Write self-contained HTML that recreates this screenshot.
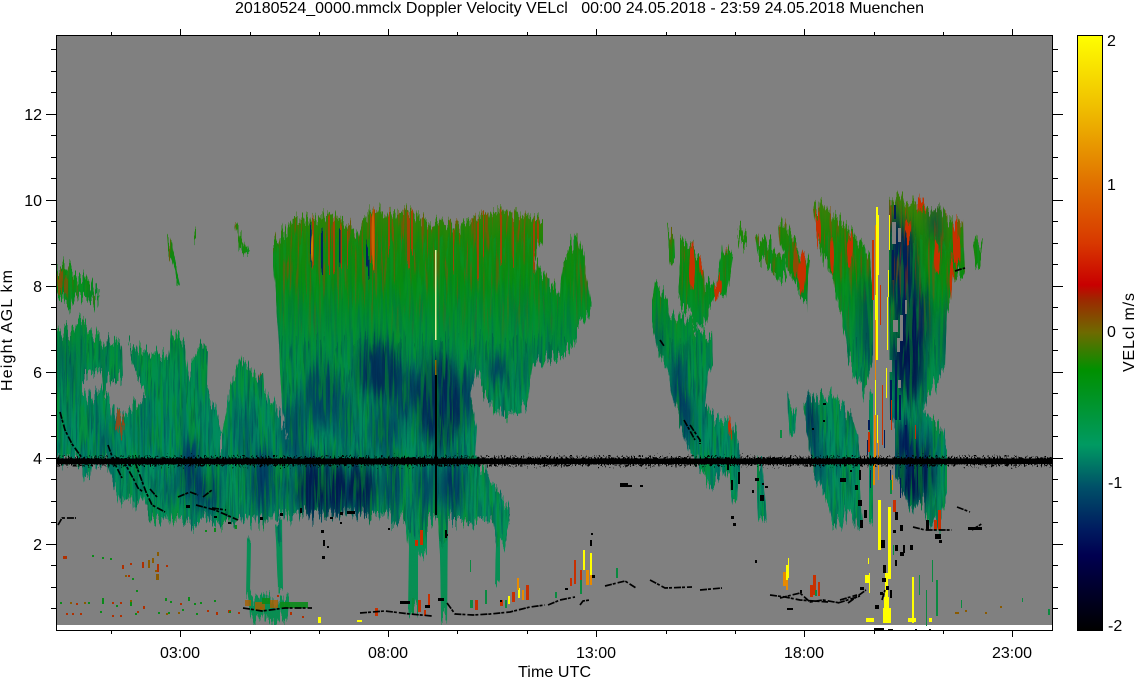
<!DOCTYPE html>
<html><head><meta charset="utf-8"><title>20180524_0000.mmclx Doppler Velocity</title>
<style>
html,body{margin:0;padding:0;background:#fff;width:1135px;height:678px;overflow:hidden}
svg{display:block}
text{font-family:"Liberation Sans",sans-serif;font-size:16px;fill:#000;white-space:pre}
</style></head><body>
<svg xmlns="http://www.w3.org/2000/svg" width="1135" height="678" viewBox="0 0 1135 678">
<defs>
<linearGradient id="cg" gradientUnits="userSpaceOnUse" x1="0" y1="205" x2="0" y2="630">
<stop offset="0" stop-color="#3a7f08"/><stop offset=".08" stop-color="#1a8608"/><stop offset=".18" stop-color="#068c10"/><stop offset=".27" stop-color="#008c30"/><stop offset=".39" stop-color="#008f4c"/><stop offset=".55" stop-color="#008c60"/><stop offset=".74" stop-color="#049058"/><stop offset="1" stop-color="#0a8c50"/>
</linearGradient>
<linearGradient id="cb" gradientUnits="userSpaceOnUse" x1="0" y1="35" x2="0" y2="630">
<stop offset="0" stop-color="#ffff00"/><stop offset=".126" stop-color="#efbc00"/><stop offset=".25" stop-color="#e07000"/><stop offset=".35" stop-color="#d83800"/><stop offset=".42" stop-color="#c80000"/><stop offset=".445" stop-color="#9c2800"/><stop offset=".5" stop-color="#6e6a00"/><stop offset=".563" stop-color="#009000"/><stop offset=".689" stop-color="#009a62"/><stop offset=".76" stop-color="#005068"/><stop offset=".83" stop-color="#001c60"/><stop offset=".875" stop-color="#000050"/><stop offset="1" stop-color="#000000"/>
</linearGradient>
<linearGradient id="ra" gradientUnits="userSpaceOnUse" x1="0" y1="205" x2="0" y2="345">
<stop offset="0" stop-color="#000" stop-opacity=".6"/><stop offset=".45" stop-color="#000" stop-opacity=".4"/><stop offset="1" stop-color="#000" stop-opacity="0"/>
</linearGradient>
<linearGradient id="ba" gradientUnits="userSpaceOnUse" x1="0" y1="260" x2="0" y2="520">
<stop offset="0" stop-color="#000" stop-opacity=".05"/><stop offset=".4" stop-color="#000" stop-opacity=".3"/><stop offset="1" stop-color="#000" stop-opacity=".4"/>
</linearGradient>
<path id="cl" d="M57 265L65 268 72 272 78 278 85 275 90 283 100 294 98 303 88 300 75 298 70 306 60 298 57 297Z
M57 335L68 327 82 324 90 333 98 335 103 342 115 338 122 347 123 377 117 385 108 382 104 395 110 400 112 413 118 418 133 408 146 403 143 390 135 375 128 344 150 353 168 357 172 330 185 345 188 373 200 343 208 348 207 390 217 413 222 437 228 397 240 357 252 373 263 372 264 395 272 402 281 420 300 470 305 515 250 520 197 522 153 522 143 497 133 510 132 497 120 502 112 480 108 462 92 465 90 477 84 478 80 462 57 462Z
M273 240L287 230 293 219 310 219 333 214 350 225 358 240 362 222 373 208 387 215 410 210 433 225 440 220 460 225 480 215 503 210 543 220 543 237 534 257 537 267 560 293 563 257 577 237 585 267 592 310 577 323 577 343 560 357 533 363 527 407 503 420 487 397 477 367 470 393 477 427 475 460 487 473 510 510 508 527 503 540 495 522 470 520 403 520 380 515 303 513 297 473 283 417 280 367 277 310 273 260Z
M405 520L427 520 427 553 418 556 418 607 408 607 409 553Z M438 520L448 520 447 620 441 620 440 560Z M493 520L510 520 505 543 500 550 500 583 495 583 496 543Z M247 537L251 537 250 600 246 600Z M275 523L282 523 283 590 278 590Z M247 597L290 600 288 618 270 621 250 620Z
M167 232L172 240 175 262 180 285 176 283 172 258 168 245Z M194 233L196 233 196 245 194 244Z M234 222L242 236 250 254 246 254 238 242Z
M667 230L674 235 675 265 670 260Z M680 242L693 248 703 262 705 285 717 283 723 245 733 258 730 278 725 297 715 293 708 312 703 327 693 325 687 308 683 308 678 293 680 272Z
M655 282L668 302 670 318 682 312 688 322 700 332 712 338 713 362 708 378 705 408 717 418 730 420 740 442 740 458 737 502 733 502 730 485 723 472 712 488 697 458 687 445 673 402 667 372 657 348 652 325 652 298Z
M757 465L762 465 767 518 758 520 757 495Z M787 397L797 415 795 432 790 438 788 418Z M737 228L747 233 747 245 740 245Z M755 235L770 243 785 260 787 275 780 283 770 268 757 252Z M778 222L787 225 800 248 810 265 808 282 807 305 800 295 790 272 780 245Z
M813 208L825 205 830 213 852 230 870 260 873 290 873 357 870 373 863 390 848 357 842 320 838 307 833 277 827 268 817 240Z
M889 205L897 198 913 203 923 201 928 210 943 210 953 222 963 220 965 273 953 277 950 303 947 313 945 367 937 380 927 393 923 407 943 430 947 447 947 497 943 510 940 530 930 520 923 503 910 510 895 473 895 430 890 413 889 300Z
M977 235L983 247 980 263 975 270 973 250Z
M803 403L817 395 837 397 852 417 858 437 860 460 860 493 863 527 845 510 842 527 832 527 827 500 813 470 807 430Z
M869 398L873 396 873 520 869 520Z"/>
<clipPath id="clc"><use href="#cl"/></clipPath>
<filter id="jag" filterUnits="userSpaceOnUse" x="56" y="35" width="996" height="590" color-interpolation-filters="sRGB">
<feTurbulence type="fractalNoise" baseFrequency="0.48 0.014" numOctaves="2" seed="4" result="n"/>
<feColorMatrix in="n" values="0 0 0 0 .5  0 1 0 0 0  0 0 0 0 0  0 0 0 0 1" result="m"/>
<feDisplacementMap in="SourceGraphic" in2="m" scale="38" xChannelSelector="R" yChannelSelector="G"/>
</filter>
<filter id="redn" filterUnits="userSpaceOnUse" x="56" y="190" width="996" height="170" color-interpolation-filters="sRGB">
<feTurbulence type="fractalNoise" baseFrequency="0.42 0.02" numOctaves="2" seed="11" result="n"/>
<feColorMatrix in="n" values="0 0 0 0 .74  0 0 0 0 .2  0 0 0 0 0  10 0 0 0 -5.9" result="r"/>
<feComposite in="r" in2="SourceGraphic" operator="in"/>
</filter>
<filter id="blun" filterUnits="userSpaceOnUse" x="56" y="240" width="996" height="300" color-interpolation-filters="sRGB">
<feTurbulence type="fractalNoise" baseFrequency="0.36 0.018" numOctaves="2" seed="23" result="n"/>
<feColorMatrix in="n" values="0 0 0 0 0  0 0 0 0 .3  0 0 0 0 .42  0 9 0 0 -4.6" result="r"/>
<feComposite in="r" in2="SourceGraphic" operator="in"/>
</filter>
<filter id="blu2" filterUnits="userSpaceOnUse" x="56" y="340" width="996" height="200" color-interpolation-filters="sRGB">
<feTurbulence type="fractalNoise" baseFrequency="0.5 0.03" numOctaves="2" seed="51" result="n"/>
<feColorMatrix in="n" values="0 0 0 0 0  0 0 0 0 .1  0 0 0 0 .32  10 0 0 0 -5.6" result="r"/>
<feComposite in="r" in2="SourceGraphic" operator="in"/>
</filter>
<filter id="grnn" filterUnits="userSpaceOnUse" x="56" y="240" width="996" height="300" color-interpolation-filters="sRGB">
<feTurbulence type="fractalNoise" baseFrequency="0.3 0.02" numOctaves="2" seed="37" result="n"/>
<feColorMatrix in="n" values="0 0 0 0 .02  0 0 0 0 .58  0 0 0 0 .16  0 0 8 0 -4" result="r"/>
<feComposite in="r" in2="SourceGraphic" operator="in"/>
</filter>
<filter id="bl" filterUnits="userSpaceOnUse" x="56" y="35" width="996" height="590"><feGaussianBlur stdDeviation="5 8"/></filter>
<filter id="lin" filterUnits="userSpaceOnUse" x="56" y="440" width="996" height="40" color-interpolation-filters="sRGB">
<feTurbulence type="fractalNoise" baseFrequency="0.7 0.4" numOctaves="2" seed="3" result="n"/>
<feColorMatrix in="n" values="0 0 0 0 .5  0 1 0 0 0  0 0 0 0 0  0 0 0 0 1" result="m"/>
<feDisplacementMap in="SourceGraphic" in2="m" scale="14" xChannelSelector="R" yChannelSelector="G"/>
</filter>
</defs>

<text x="235" y="13" textLength="689" lengthAdjust="spacing">20180524_0000.mmclx Doppler Velocity VELcl   00:00 24.05.2018 - 23:59 24.05.2018 Muenchen</text>

<rect x="56" y="35" width="996" height="590" fill="#808080"/>

<g filter="url(#jag)">
<use href="#cl" fill="url(#cg)"/>
<g clip-path="url(#clc)">
<g filter="url(#bl)" fill="#002a62">
<ellipse cx="60" cy="355" rx="4" ry="22" opacity=".5"/><ellipse cx="72" cy="375" rx="4" ry="30" opacity=".4"/><ellipse cx="105" cy="440" rx="6" ry="20" opacity=".4"/><ellipse cx="145" cy="430" rx="5" ry="20" opacity=".25"/>
<ellipse cx="190" cy="470" rx="10" ry="30" opacity=".9"/><ellipse cx="207" cy="492" rx="13" ry="18" opacity=".85"/><ellipse cx="170" cy="490" rx="6" ry="16" opacity=".45"/><ellipse cx="245" cy="440" rx="6" ry="28" opacity=".5"/><ellipse cx="262" cy="482" rx="12" ry="30" opacity=".85"/><ellipse cx="285" cy="495" rx="5" ry="18" opacity=".55"/>
<ellipse cx="293" cy="432" rx="12" ry="32" opacity=".6"/><ellipse cx="322" cy="395" rx="18" ry="32" opacity=".7"/><ellipse cx="345" cy="420" rx="8" ry="30" opacity=".45"/>
<ellipse cx="378" cy="370" rx="22" ry="28" fill="#002058" opacity=".85"/><ellipse cx="405" cy="392" rx="14" ry="26" opacity=".7"/><ellipse cx="440" cy="402" rx="24" ry="46" fill="#001e56" opacity=".9"/><ellipse cx="470" cy="395" rx="6" ry="30" opacity=".7"/><ellipse cx="385" cy="430" rx="16" ry="22" opacity=".6"/>
<ellipse cx="310" cy="488" rx="14" ry="30" fill="#001c50"/><ellipse cx="335" cy="490" rx="15" ry="28" fill="#001c50"/><ellipse cx="362" cy="488" rx="14" ry="28" fill="#001c50"/><ellipse cx="392" cy="485" rx="9" ry="26" opacity=".85"/><ellipse cx="425" cy="488" rx="10" ry="24" opacity=".7"/><ellipse cx="452" cy="485" rx="12" ry="28" opacity=".85"/>
<ellipse cx="498" cy="370" rx="10" ry="14" opacity=".85"/><ellipse cx="525" cy="368" rx="5" ry="16" opacity=".55"/><ellipse cx="555" cy="335" rx="6" ry="14" opacity=".2"/>
<ellipse cx="678" cy="385" rx="6" ry="30" opacity=".95"/><ellipse cx="686" cy="420" rx="7" ry="26" opacity=".85"/><ellipse cx="660" cy="338" rx="4" ry="14" opacity=".6"/>
<ellipse cx="866" cy="320" rx="6" ry="45" opacity=".6"/><ellipse cx="873" cy="350" rx="4" ry="30" opacity=".6"/>
<ellipse cx="905" cy="275" rx="11" ry="48" fill="#001c58"/><ellipse cx="908" cy="350" rx="16" ry="50" fill="#00184e"/><ellipse cx="922" cy="320" rx="6" ry="34" fill="#001c58"/><ellipse cx="935" cy="225" rx="6" ry="18" opacity=".6"/><ellipse cx="945" cy="340" rx="4" ry="30" opacity=".7"/><ellipse cx="895" cy="260" rx="6" ry="50" fill="#001c58"/>
<ellipse cx="915" cy="475" rx="20" ry="28" fill="#00184e"/><ellipse cx="905" cy="445" rx="12" ry="22" fill="#001c58"/><ellipse cx="930" cy="440" rx="5" ry="12" opacity=".6"/>
<ellipse cx="811" cy="425" rx="6" ry="26" fill="#001c58"/><ellipse cx="818" cy="462" rx="5" ry="18" opacity=".7"/><ellipse cx="852" cy="415" rx="5" ry="12" opacity=".8"/>
</g>
<rect x="56" y="240" width="996" height="300" fill="#000" fill-opacity=".55" filter="url(#grnn)"/>
<rect x="56" y="240" width="996" height="300" fill="url(#ba)" filter="url(#blun)"/>
<rect x="56" y="340" width="996" height="200" fill="#000" fill-opacity=".22" filter="url(#blu2)"/>
<rect x="56" y="205" width="996" height="140" fill="url(#ra)" filter="url(#redn)"/>
<path fill="#c83000" opacity=".75" d="M312 220h2v45h-2zM328 218h2v50h-2zM333 214h2v60h-2zM340 222h2v40h-2zM347 225h1v45h-1zM370 214h2v50h-2zM373 208h2v60h-2zM388 215h2v40h-2zM407 212h3v50h-3zM411 210h2v35h-2zM453 225h1v50h-1zM477 218h2v60h-2zM483 214h1v45h-1zM500 214h2v50h-2zM513 222h1v45h-1zM533 222h2v50h-2zM537 225h2v40h-2z"/>
<path fill="#00265e" d="M310 225h1.500v35h-1.500zM321 230h2v45h-2zM339 232h1.500v40h-1.500zM366 240h2v25h-2zM368 262h1.500v20h-1.500z"/>
<g fill="#c83000">
<ellipse cx="802" cy="270" rx="4" ry="22"/><ellipse cx="796" cy="262" rx="3" ry="16" opacity=".7"/><ellipse cx="692" cy="270" rx="3" ry="22"/><ellipse cx="701" cy="262" rx="2" ry="12"/><ellipse cx="718" cy="288" rx="4" ry="8"/><ellipse cx="728" cy="248" rx="3" ry="5"/>
<ellipse cx="908" cy="233" rx="3" ry="12"/><ellipse cx="937" cy="257" rx="3" ry="16"/><ellipse cx="955" cy="233" rx="2.500" ry="20"/><ellipse cx="958" cy="250" rx="2.500" ry="15"/><ellipse cx="952" cy="283" rx="2.500" ry="20"/><ellipse cx="922" cy="205" rx="5" ry="6"/>
<ellipse cx="818" cy="227" rx="3" ry="15"/><ellipse cx="832" cy="253" rx="2" ry="20"/><ellipse cx="850" cy="247" rx="3" ry="15"/>
<ellipse cx="60" cy="280" rx="3" ry="12" opacity=".6"/><ellipse cx="66" cy="285" rx="2" ry="10" opacity=".5"/><ellipse cx="742" cy="440" rx="2" ry="8" opacity=".4"/><ellipse cx="730" cy="428" rx="2" ry="10"/><ellipse cx="120" cy="425" rx="5" ry="7" opacity=".7"/><ellipse cx="260" cy="368" rx="2" ry="6"/>
<ellipse cx="373" cy="240" rx="1.5" ry="30" fill="#d06000"/><ellipse cx="312" cy="243" rx="1" ry="12" fill="#d08000"/>
</g>
</g>
<path d="M82 373L102 374 103 385 100 399 88 398 82 386Z M220 437L222 437 222 458 220 458Z M270 372L277 372 279 400 272 399Z" fill="#808080"/>
</g>

<!-- speckled edge columns, gray holes -->
<g shape-rendering="crispEdges">
<path d="M892 222h4v22h-4zM898 228h3v14h-3zM893 320h5v12h-5zM900 315h3v26h-3zM897 338h3v14h-3zM905 300h2v14h-2zM889 360h3v12h-3zM898 380h3v8h-3zM882 200h6v230h-6z" fill="#808080"/>
<path d="M892 250h2v30h-2zM895 360h2v60h-2zM890 380h2v40h-2zM899 395h2v25h-2zM905 425h2v25h-2zM884 430h1v18h-1zM894 205h2v14h-2zM868 420h2v10h-2zM867 440h1v15h-1zM870 470h1v18h-1zM890 470h1v16h-1zM900 478h1v20h-1z" fill="#001c58"/>
<!-- yellow / orange columns -->
<path d="M876 207h2v100h-2zM875 290h3v70h-3zM877 215h2v60h-2zM889 215h1v35h-1zM888 270h1v27h-1zM887 297h1v53h-1zM886 368h1v30h-1zM875 370h1v45h-1zM877 415h1v28h-1zM878 500h3v50h-3zM879 515h2v25h-2zM888 507h3v56h-3zM888 563h3v16h-3zM885 573h3v24h-3zM884 597h5v14h-5zM883 608h8v15h-8zM866 618h8v4h-8zM869 573h1v20h-1zM865 575h4v8h-4zM868 558h1v6h-1zM912 577h2v46h-2zM908 618h8v4h-8zM929 618h3v4h-3zM786 565h2v25h-2zM788 558h1v20h-1zM583 550h2v20h-2zM590 553h2v22h-2zM518 588h2v10h-2zM508 596h2v8h-2zM357 620h5v2h-5zM318 617h3v6h-3z" fill="#ffff00"/>
<path d="M875 320h1v60h-1zM874 415h2v50h-2zM873 465h2v20h-2zM875 225h1v70h-1zM878 440h1v40h-1zM892 475h1v15h-1zM786 580h2v10h-2zM783 572h3v14h-3zM590 575h2v10h-2zM586 570h3v15h-3zM522 590h2v10h-2zM517 578h2v12h-2z" fill="#e88a00"/>
<path d="M872 240h2v60h-2zM880 285h1v40h-1zM891 400h1v30h-1zM868 432h2v20h-2zM882 385h1v60h-1zM893 500h3v12h-3zM915 425h1v14h-1zM938 510h3v20h-3zM934 520h3v10h-3zM813 575h3v20h-3zM818 582h2v14h-2zM810 585h3v12h-3zM574 560h2v24h-2zM580 570h2v20h-2zM570 578h2v8h-2zM420 530h3v15h-3zM415 540h3v6h-3zM512 592h3v10h-3zM526 585h3v15h-3zM500 600h3v6h-3zM475 600h3v10h-3zM418 600h3v12h-3zM428 594h2v14h-2zM375 608h3v8h-3zM445 532h2v6h-2zM424 610h2v6h-2z" fill="#c83000"/>
<path d="M890 480h2v14h-2zM893 545h1v10h-1zM932 560h1v22h-1zM919 575h1v20h-1zM926 590h1v36h-1zM936 580h2v36h-2zM961 600h1v8h-1zM780 430h2v8h-2zM815 590h2v6h-2zM412 598h2v16h-2zM485 590h2v14h-2zM470 600h3v8h-3zM505 600h2v8h-2zM470 560h1v12h-1zM555 592h2v6h-2zM580 580h2v14h-2zM616 568h2v10h-2zM1048 609h2v6h-2zM1022 598h1v4h-1z" fill="#0a8a40"/>
<path d="M435 250h1.500v90h-1.500z" fill="#e8f0a0"/>
<path d="M435 375h2v140h-2z" fill="#000"/>
<path d="M435 360h1.500v15h-1.500z" fill="#8a6a00"/>
</g>

<!-- low level speckle -->
<path shape-rendering="crispEdges" fill="#b03000" d="M63 556h4v3h-4zM76 603h2v2h-2zM66 613h2v2h-2zM72 613h2v2h-2zM80 613h2v2h-2zM112 602h2v2h-2zM120 602h2v2h-2zM130 603h2v2h-2zM137 611h2v2h-2zM112 615h2v2h-2zM120 615h2v2h-2zM122 565h2v4h-2zM142 562h2v6h-2zM130 563h2v2h-2zM157 564h2v8h-2zM166 565h2v2h-2zM128 575h2v2h-2zM143 606h2v3h-2zM180 603h2v2h-2zM207 610h2v2h-2zM216 612h2v3h-2zM228 610h3v3h-3zM238 612h2v2h-2zM260 607h2v2h-2zM277 595h2v2h-2zM290 612h2v3h-2zM302 616h2v2h-2z"/>
<path shape-rendering="crispEdges" fill="#0a8a18" d="M60 602h2v2h-2zM88 602h2v2h-2zM100 611h2v2h-2zM92 555h2v2h-2zM102 557h2v2h-2zM110 558h2v2h-2zM132 578h2v2h-2zM116 605h2v2h-2zM136 590h2v2h-2zM102 598h2v6h-2zM130 600h2v6h-2zM165 598h2v3h-2zM170 601h2v2h-2zM188 597h2v4h-2zM194 603h2v2h-2zM200 602h2v2h-2zM135 613h2v2h-2zM158 612h2v2h-2zM168 612h2v2h-2zM182 609h2v2h-2zM196 613h2v2h-2zM214 600h2v2h-2zM229 611h2v2h-2zM235 525h2v4h-2zM214 528h2v4h-2zM205 530h2v2h-2z"/>
<path shape-rendering="crispEdges" fill="#8a5a00" d="M125 575h2v2h-2zM148 560h2v8h-2zM152 558h2v5h-2zM157 552h2v4h-2zM155 570h2v2h-2zM156 574h3v6h-3zM130 600h2v2h-2zM70 602h2v2h-2zM84 602h2v2h-2zM178 612h2v2h-2zM166 613h2v2h-2zM1000 606h2v2h-2zM955 612h4v2h-4zM965 610h2v2h-2zM985 612h2v2h-2z"/>
<path shape-rendering="crispEdges" fill="#a86000" d="M255 602h10v8h-10zM270 600h8v8h-8zM245 600h6v6h-6z" opacity=".8"/>
<path shape-rendering="crispEdges" fill="#0a8a18" d="M280 602h28v6h-28zM262 598h8v6h-8z" opacity=".9"/>

<!-- thick line at 4 km -->
<rect x="56" y="458" width="997" height="6.500" fill="#000" filter="url(#lin)"/>
<rect x="57" y="458.500" width="995" height="5.500" fill="#000" shape-rendering="crispEdges"/>

<!-- black traces -->
<g fill="none" stroke="#000" stroke-width="1.700" stroke-linejoin="round" stroke-dasharray="7 1 3 2">
<path d="M60 412L65 430 72 444 85 462"/>
<path d="M108 445L114 462 122 478M123 460L133 478 138 488 143 492M150 489L157 497M135 462L146 492 152 505 165 512"/>
<path d="M178 497L190 492 198 495M203 497L212 490M212 508L226 510M196 505L215 510 238 520M58 525L62 518 76 518"/>
<path d="M243 608L262 611 285 608 312 608"/>
<path d="M360 613L385 611 410 614 432 616M447 603L455 614 473 615 490 614 510 612 530 607 545 605M548 605L560 600 575 597M580 605L583 601 590 600M605 586L625 581 636 588M650 580L665 588 692 587M700 590L722 588M770 595L785 597 800 600 828 602M840 600L857 595M838 603L860 596M780 598L800 593 810 602 823 600 840 603"/>
<path d="M848 603L866 590M882 600L885 590M913 527L925 530 952 530M957 507L970 512M972 530L983 523M955 271L965 268M660 340L664 346M684 420L695 440M690 425L700 440 700 444"/>
</g>
<path shape-rendering="crispEdges" fill="#000" d="M186 505h4v3h-4zM214 516h3v2h-3zM228 522h3v2h-3zM260 517h3v3h-3zM280 513h3v3h-3zM300 508h2v5h-2zM321 530h3v3h-3zM323 540h2v6h-2zM322 556h3v3h-3zM330 517h3v2h-3zM347 511h8v3h-8zM327 546h2v2h-2zM340 512h3v3h-3zM340 522h2v2h-2zM388 528h2v2h-2zM425 605h5v3h-5zM400 601h10v3h-10zM438 598h6v3h-6zM445 530h2v8h-2zM446 534h2v2h-2zM500 600h2v2h-2zM591 533h2v2h-2zM590 540h2v6h-2zM592 575h3v3h-3zM565 588h3v2h-3zM620 483h8v2h-8zM620 485h12v2h-12zM755 560h2v3h-2zM762 483h2v2h-2zM755 478h4v3h-4zM752 490h2v3h-2zM760 495h4v6h-4zM765 486h3v2h-3zM731 480h2v10h-2zM738 472h2v12h-2zM727 460h2v10h-2zM731 516h3v3h-3zM733 523h3v3h-3zM640 485h3v2h-3zM859 470h2v10h-2zM855 485h3v5h-3zM858 500h4v6h-4zM864 510h3v8h-3zM860 520h3v8h-3zM895 512h3v8h-3zM900 525h3v6h-3zM893 530h3v3h-3zM881 540h4v8h-4zM895 545h3v6h-3zM903 545h2v8h-2zM910 545h3v5h-3zM900 552h4v4h-4zM883 565h3v8h-3zM895 560h2v6h-2zM882 578h4v4h-4zM886 586h3v4h-3zM880 592h3v3h-3zM890 590h2v8h-2zM875 605h4v4h-4zM860 587h4v3h-4zM926 520h3v10h-3zM935 534h6v5h-6zM939 540h3v3h-3zM968 527h14v3h-14zM843 460h4v4h-4zM840 478h6v4h-6zM850 470h2v2h-2zM812 428h2v2h-2zM823 403h3v2h-3zM823 420h2v2h-2zM800 590h2v3h-2zM787 608h6v2h-6zM874 628h10v3h-10zM888 629h5v2h-5zM915 629h2v2h-2zM929 629h2v2h-2z"/>

<!-- frame and ticks -->
<rect x="56.500" y="35.500" width="996" height="595" fill="none" stroke="#000" stroke-width="1" shape-rendering="crispEdges"/>
<path fill="none" stroke="#000" stroke-width="1" shape-rendering="crispEdges" d="
M51 49.5H56M51 71.5H56M51 92.500H56M46 114.5H56M51 135.5H56M51 157.5H56M51 178.5H56M46 200.5H56M51 221.5H56M51 243.5H56M51 264.5H56M46 286.5H56M51 307.5H56M51 329.5H56M51 350.5H56M46 372.5H56M51 393.5H56M51 415.5H56M51 436.5H56M46 458.5H56M51 479.5H56M51 501.5H56M51 522.5H56M46 544.5H56M51 565.5H56M51 587.5H56M51 608.5H56
M1053 49.5H1058M1053 71.5H1058M1053 92.500H1058M1053 114.5H1063M1053 135.5H1058M1053 157.5H1058M1053 178.5H1058M1053 200.5H1063M1053 221.5H1058M1053 243.5H1058M1053 264.5H1058M1053 286.5H1063M1053 307.5H1058M1053 329.5H1058M1053 350.5H1058M1053 372.5H1063M1053 393.5H1058M1053 415.5H1058M1053 436.5H1058M1053 458.5H1063M1053 479.5H1058M1053 501.5H1058M1053 522.5H1058M1053 544.5H1063M1053 565.5H1058M1053 587.5H1058M1053 608.5H1058
M111.5 32V35M180.5 29V35M250.5 32V35M319.5 32V35M388.5 29V35M457.5 32V35M527.5 32V35M596.5 29V35M666.5 32V35M735.5 32V35M804.5 29V35M874.5 32V35M943.5 32V35M1012.5 29V35
M111.5 631V634M180.5 631V637M250.5 631V634M319.5 631V634M388.5 631V637M457.5 631V634M527.5 631V634M596.5 631V637M666.5 631V634M735.5 631V634M804.5 631V637M874.5 631V634M943.5 631V634M1012.5 631V637"/>

<!-- colorbar -->
<rect x="1077.500" y="35.500" width="25" height="595" fill="url(#cb)" stroke="#000" stroke-width="1" shape-rendering="crispEdges"/>

<!-- labels -->
<g text-anchor="end">
<text x="42" y="120">12</text><text x="42" y="206">10</text><text x="42" y="292">8</text><text x="42" y="378">6</text><text x="42" y="464">4</text><text x="42" y="550">2</text>
</g>
<g text-anchor="middle">
<text x="180" y="658">03:00</text><text x="388" y="658">08:00</text><text x="596" y="658">13:00</text><text x="804" y="658">18:00</text><text x="1012" y="658">23:00</text>
</g>
<text x="518" y="677" textLength="73" lengthAdjust="spacing">Time UTC</text>
<text transform="translate(12 391) rotate(-90)" textLength="121" lengthAdjust="spacing">Height AGL km</text>
<text x="1107" y="46">2</text><text x="1107" y="190">1</text><text x="1107" y="337">0</text><text x="1108" y="488">-1</text><text x="1108" y="631">-2</text>
<text transform="translate(1134 372) rotate(-90)" textLength="79" lengthAdjust="spacing">VELcl m/s</text>
</svg>
</body></html>
